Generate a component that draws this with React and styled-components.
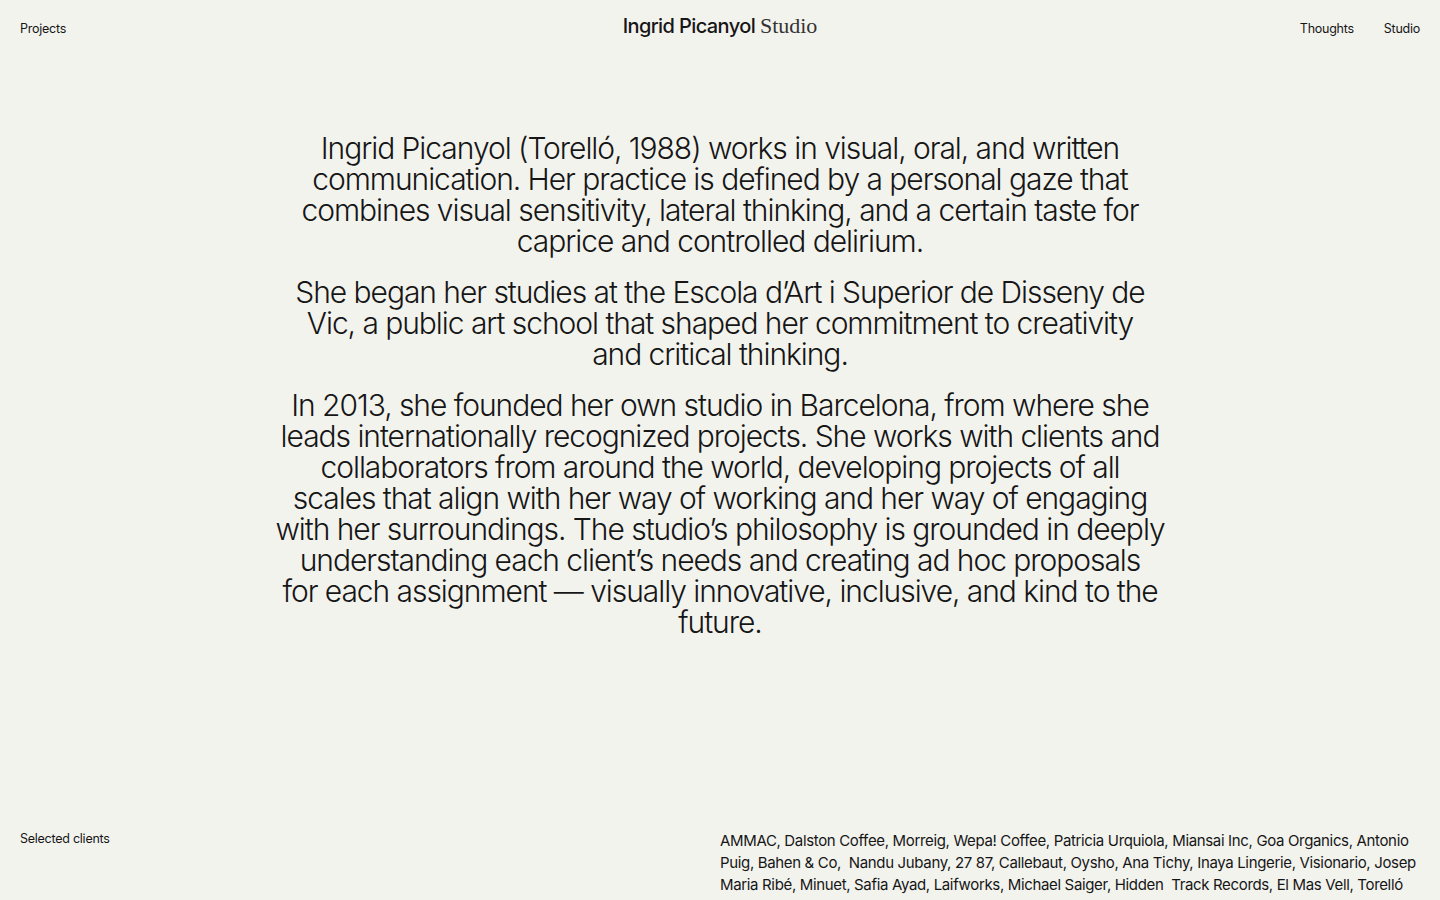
import React from "react";
import styled, { createGlobalStyle } from "styled-components";

const Global = createGlobalStyle`
  html, body {
    margin: 0;
    padding: 0;
    background: #f3f3ee;
    color: #161616;
    font-family: Inter, "Liberation Sans", sans-serif;
  }
`;

// lines kept as in the layout of the original page
const paragraphs = [
  [
    "Ingrid Picanyol (Torelló, 1988) works in visual, oral, and written",
    "communication. Her practice is defined by a personal gaze that",
    "combines visual sensitivity, lateral thinking, and a certain taste for",
    "caprice and controlled delirium.",
  ],
  [
    "She began her studies at the Escola d’Art i Superior de Disseny de",
    "Vic, a public art school that shaped her commitment to creativity",
    "and critical thinking.",
  ],
  [
    "In 2013, she founded her own studio in Barcelona, from where she",
    "leads internationally recognized projects. She works with clients and",
    "collaborators from around the world, developing projects of all",
    "scales that align with her way of working and her way of engaging",
    "with her surroundings. The studio’s philosophy is grounded in deeply",
    "understanding each client’s needs and creating ad hoc proposals",
    "for each assignment — visually innovative, inclusive, and kind to the",
    "future.",
  ],
];

const clients = [
  "AMMAC, Dalston Coffee, Morreig, Wepa! Coffee, Patricia Urquiola, Miansai Inc, Goa Organics, Antonio",
  "Puig, Bahen & Co,  Nandu Jubany, 27 87, Callebaut, Oysho, Ana Tichy, Inaya Lingerie, Visionario, Josep",
  "Maria Ribé, Minuet, Safia Ayad, Laifworks, Michael Saiger, Hidden  Track Records, El Mas Vell, Torelló",
];

function App() {
  return (
    <Page>
      <Global />
      <Header>
        <NavLink>Projects</NavLink>
        <Logo>
          Ingrid Picanyol <Serif>Studio</Serif>
        </Logo>
        <NavRight>
          <NavLink>Thoughts</NavLink>
          <NavLink>Studio</NavLink>
        </NavRight>
      </Header>
      <Main>
        {paragraphs.map((lines, i) => (
          <Para key={i}>
            {lines.map((l, j) => (
              <Line key={j}>{l}</Line>
            ))}
          </Para>
        ))}
      </Main>
      <Footer>
        <Label>Selected clients</Label>
        <Clients>
          {clients.map((l, j) => (
            <Line key={j}>{l}</Line>
          ))}
        </Clients>
      </Footer>
    </Page>
  );
}

export default App;

const Page = styled.div`
  min-height: 100vh;
  display: flex;
  flex-direction: column;
`;

const Header = styled.header`
  display: grid;
  grid-template-columns: 1fr auto 1fr;
  align-items: center;
  padding: 15px 20px 0;
  height: 28px;
`;

const NavLink = styled.a`
  font-size: 12.5px;
  line-height: 16px;
  color: #161616;
  letter-spacing: -0.02em;
  cursor: pointer;
`;

const NavRight = styled.nav`
  display: flex;
  justify-content: flex-end;
  gap: 30px;
`;

const Logo = styled.div`
  font-size: 20px;
  font-weight: 500;
  letter-spacing: -0.03em;
  line-height: 24px;
  margin-top: -6px;
`;

const Serif = styled.span`
  font-family: "Liberation Serif", "DejaVu Serif", serif;
  font-weight: 400;
  font-size: 22px;
  letter-spacing: 0;
  color: #333;
`;

const Main = styled.main`
  width: 940px;
  margin: 90px auto 0;
  text-align: center;
  flex: 1;
`;

const Para = styled.p`
  margin: 0 0 20px;
  font-size: 30px;
  line-height: 31px;
  font-weight: 300;
  letter-spacing: -0.035em;
`;

const Line = styled.span`
  display: block;
  white-space: pre;
`;

const Footer = styled.footer`
  display: grid;
  grid-template-columns: minmax(0, 1fr) minmax(0, 1fr);
  padding: 0 20px 4px;
`;

const Label = styled.div`
  font-size: 12.5px;
  line-height: 16px;
  letter-spacing: -0.02em;
  margin-top: -2px;
`;

const Clients = styled.div`
  font-size: 15px;
  line-height: 22px;
  letter-spacing: -0.023em;
  margin-top: -3px;
`;
